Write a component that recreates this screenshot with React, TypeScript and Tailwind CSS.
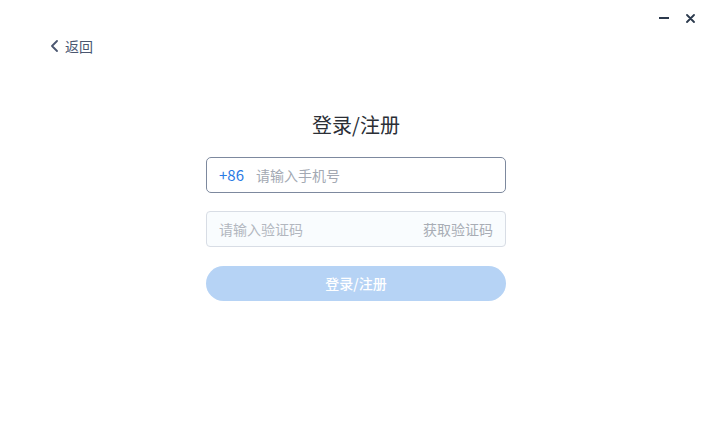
import { useState } from "react";

const font = { fontFamily: '"Noto Sans CJK SC", "Noto Sans", sans-serif' };

const App = () => {
  const [phone, setPhone] = useState("");
  const [code, setCode] = useState("");

  return (
    <div className="flex h-[433px] w-[707px] flex-col bg-white" style={font}>
      {/* 窗口按钮 */}
      <div className="flex h-[36px] items-center justify-end gap-[16px] pr-[12px]">
        <button className="flex h-[14px] w-[10px] items-center justify-center">
          <span className="block h-[2px] w-[10px] bg-[#2c3a4d]" />
        </button>
        <button className="flex h-[14px] w-[10px] items-center justify-center">
          <svg width="9" height="9" viewBox="0 0 9 9">
            <path d="M1 1 L8 8 M8 1 L1 8" stroke="#2c3a4d" strokeWidth="1.8" strokeLinecap="round" />
          </svg>
        </button>
      </div>

      {/* 返回 */}
      <div className="flex h-[20px] items-center pl-[50px]">
        <button className="flex items-center gap-[6px] text-[14px] text-[#4a5670]">
          <svg width="9" height="12" viewBox="0 0 9 12">
            <path d="M7 1 L2 6 L7 11" fill="none" stroke="#4a5670" strokeWidth="1.8" strokeLinecap="round" strokeLinejoin="round" />
          </svg>
          返回
        </button>
      </div>

      {/* 表单 */}
      <div className="flex flex-col items-center pl-[5px]">
        <h1 className="mt-[55px] h-[28px] text-[20px] leading-[28px] text-[#2b2f36]">登录/注册</h1>

        <div className="mt-[18px] flex h-[36px] w-[300px] items-center rounded-[5px] border border-[#7d899e] bg-white pl-[12px] pr-[12px]">
          <span className="text-[15px] text-[#2a7ae4]">+86</span>
          <input
            value={phone}
            onChange={(e) => setPhone(e.target.value)}
            placeholder="请输入手机号"
            className="ml-[12px] flex-1 bg-transparent text-[14px] text-[#333] outline-none placeholder:text-[#a3a9b3]"
          />
        </div>

        <div className="mt-[18px] flex h-[36px] w-[300px] items-center rounded-[4px] border border-[#d8dde5] bg-[#f9fcfe] px-[12px]">
          <input
            value={code}
            onChange={(e) => setCode(e.target.value)}
            placeholder="请输入验证码"
            className="flex-1 bg-transparent text-[14px] text-[#333] outline-none placeholder:text-[#b2b7bf]"
          />
          <span className="text-[14px] text-[#a8adb5]">获取验证码</span>
        </div>

        <button className="mt-[19px] flex h-[35px] w-[300px] items-center justify-center rounded-full bg-[#b6d3f5] text-[14px] font-medium text-white">
          登录/注册
        </button>
      </div>
    </div>
  );
};

export default App;
